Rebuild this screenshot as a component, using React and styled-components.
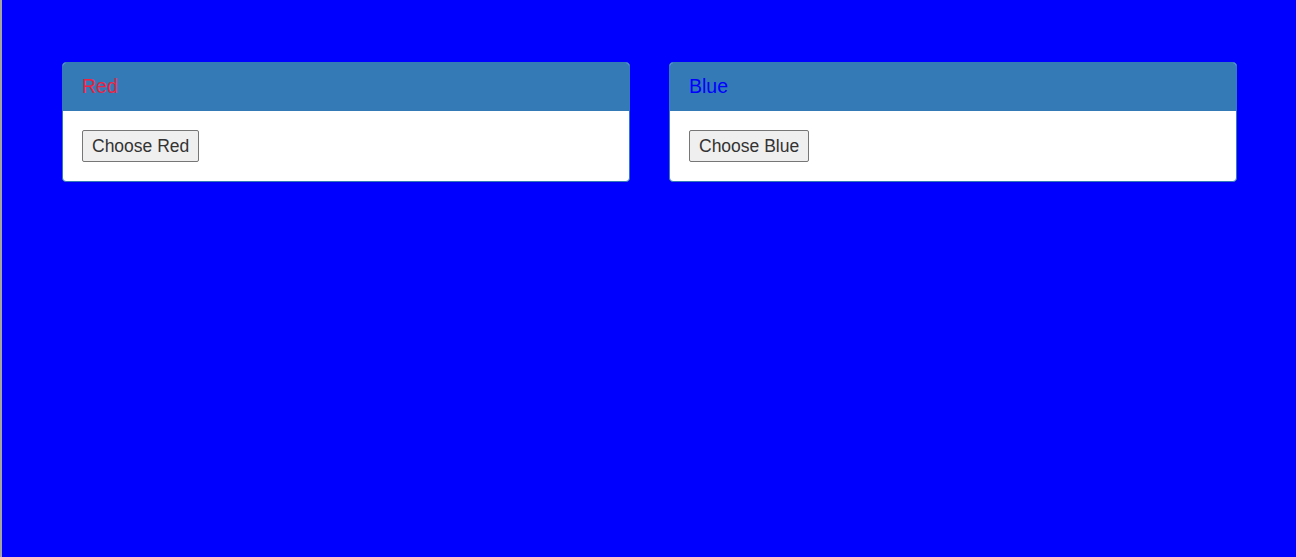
import React from "react";
import styled, { createGlobalStyle } from "styled-components";

const GlobalStyle = createGlobalStyle`
  html, body {
    margin: 0;
    padding: 0;
    background: #0000ff;
    font-family: "Liberation Sans", Arial, sans-serif;
  }
`;

const Page = styled.div`
  box-sizing: border-box;
  min-height: 100vh;
  border-left: 2px solid #a3a3a3;
  padding: 62px 59px 0 60px;
  display: grid;
  grid-template-columns: 1fr 1fr;
  column-gap: 39px;
  align-content: start;
`;

const Panel = styled.div`
  background: #fff;
  border: 1px solid #337ab7;
  border-radius: 4px;
  overflow: hidden;
  box-shadow: 0 1px 1px rgba(0, 0, 0, 0.05);
`;

const Heading = styled.div`
  background: #337ab7;
  padding: 12px 19px 13px;
  font-size: 19.5px;
  line-height: 23px;
  color: ${({ color }) => color};
`;

const Body = styled.div`
  padding: 19px 19px 19px;
`;

const Button = styled.button`
  display: block;
  font-family: "Liberation Sans", Arial, sans-serif;
  font-size: 17.5px;
  line-height: 22px;
  padding: 4px 9px;
  color: #333;
  background: #efefef;
  border: 1px solid #767676;
  border-radius: 2px;
`;

const colors = [
  { name: "Red", text: "#f0223f" },
  { name: "Blue", text: "#0000ff" },
];

const App = () => {
  return (
    <>
      <GlobalStyle />
      <Page>
        {colors.map((c) => (
          <Panel key={c.name}>
            <Heading color={c.text}>{c.name}</Heading>
            <Body>
              <Button>Choose {c.name}</Button>
            </Body>
          </Panel>
        ))}
      </Page>
    </>
  );
};

export default App;
